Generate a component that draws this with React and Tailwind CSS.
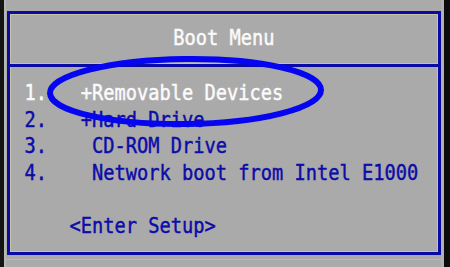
const rows = [
  { text: '1.   +Removable Devices', active: true },
  { text: '2.   +Hard Drive' },
  { text: '3.    CD-ROM Drive' },
  { text: '4.    Network boot from Intel E1000' },
  { text: '' },
  { text: '    <Enter Setup>' },
]

function Row({ text, active }) {
  return (
    <div
      className={`h-[26.7px] leading-[26.7px] whitespace-pre scale-y-[1.18] ${
        active ? 'text-[#fbfbfb]' : 'text-[#0c0ca8]'
      }`}
    >
      {text}
    </div>
  )
}

export default function App() {
  return (
    <div
      className="relative flex w-[450px] h-[267px] overflow-hidden bg-[#aaaaaa] text-[18.69px] [-webkit-text-stroke:0.4px]"
      style={{ fontFamily: '"DejaVu Sans Mono", "Liberation Mono", monospace' }}
    >
      {/* left edge */}
      <div className="w-[4px] bg-[#141414]" />
      <div className="w-[2px] bg-[#b6b6b6]" />

      <div className="flex flex-col flex-1">
        <div className="h-[11px] ml-[1px]" />

        {/* boot menu box */}
        <div className="ml-[1px] w-[434px] h-[244px] border-[3px] border-[#0a0aa6] shadow-[inset_1px_1px_0_#c6c2a6,inset_-1px_-1px_0_#c6c2a6]">
          <div className="h-[49px] pt-[10.9px]">
            <div className="h-[26.7px] leading-[26.7px] text-center text-[#fbfbfb] scale-y-[1.18]">
              Boot Menu
            </div>
          </div>
          <div className="h-[4px] border-t border-[#c6c2a6] bg-[#0a0aa6]" />
          <div className="pt-[12.9px] pl-[14.5px]">
            {rows.map((r, i) => (
              <Row key={i} text={r.text} active={r.active} />
            ))}
          </div>
        </div>

        <div className="mt-[4px] h-[1px] bg-[#b8b8b8]" />
      </div>

      {/* right edge */}
      <div className="w-[3px] bg-[#b2b2b2]" />
      <div className="w-[6px] bg-[#0c0c0c]" />

      {/* hand-drawn highlight */}
      <svg className="absolute inset-0 pointer-events-none" width="450" height="267">
        <ellipse
          cx="185.5"
          cy="91.5"
          rx="135.5"
          ry="32.5"
          fill="none"
          stroke="#0505f2"
          strokeWidth="6"
          transform="rotate(-0.7 185.5 91.5)"
        />
      </svg>
    </div>
  )
}
